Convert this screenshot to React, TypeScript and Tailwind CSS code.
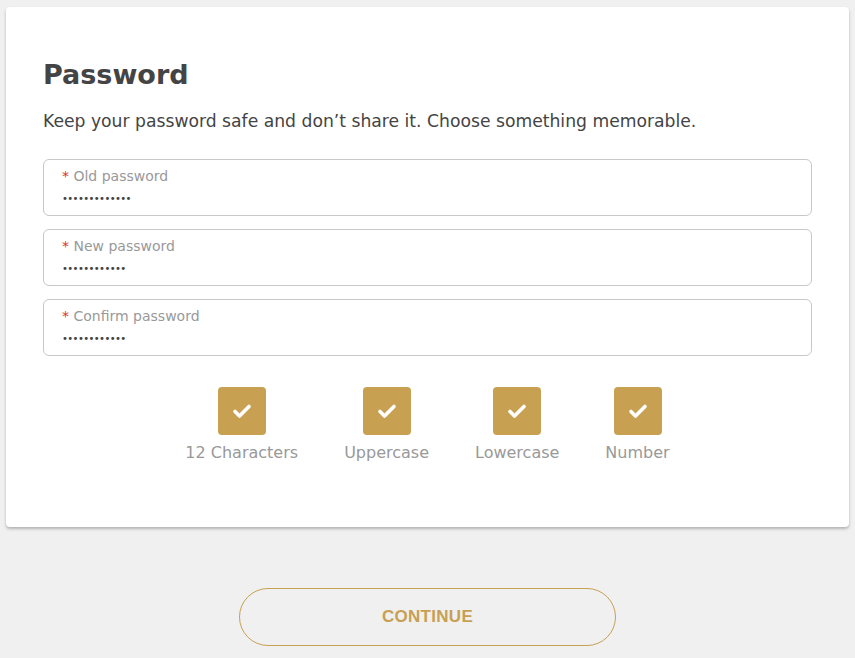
import React from "react";

const gold = "#c8a052";

function Field({ label, dots }: { label: string; dots: number }) {
  return (
    <div className="h-[57px] rounded-[6px] border border-[#c8c8c8] px-[18px] pt-[7px]">
      <div className="text-[14px] leading-[18px] text-[#999999]">
        <span className="text-[#e0301e]">*</span> {label}
      </div>
      <div className="mt-[8px] text-[10px] leading-[12px] tracking-[-0.6px] text-[#444]">
        {"•".repeat(dots)}
      </div>
    </div>
  );
}

function Check({ label }: { label: string }) {
  return (
    <div className="flex flex-col items-center">
      <div className="flex h-[48px] w-[48px] items-center justify-center rounded-[4px]" style={{ backgroundColor: gold }}>
        <svg width="20" height="16" viewBox="0 0 20 16">
          <path d="M3 8.5 L7.5 13 L17 3.5" fill="none" stroke="#fff" strokeWidth="3.6" strokeLinecap="round" strokeLinejoin="round" />
        </svg>
      </div>
      <div className="mt-[8px] text-[16px] leading-[20px] text-[#999999]">{label}</div>
    </div>
  );
}

export default function App() {
  return (
    <div className="min-h-[658px] bg-[#f0f0f0] px-[6px] pt-[7px]" style={{ fontFamily: '"DejaVu Sans", sans-serif' }}>
      <div className="h-[520px] rounded-[4px] bg-white px-[37px] pt-[52px] shadow-[0_2px_3px_rgba(0,0,0,0.25)]">
        <h1 className="text-[27px] font-bold leading-[32px] text-[#444444]">Password</h1>
        <p className="mt-[19px] text-[17.2px] leading-[22px] text-[#444444]">
          Keep your password safe and don’t share it. Choose something memorable.
        </p>
        <div className="mt-[27px] flex flex-col gap-[13px]">
          <Field label="Old password" dots={13} />
          <Field label="New password" dots={12} />
          <Field label="Confirm password" dots={12} />
        </div>
        <div className="mt-[31px] flex justify-center gap-[46px]">
          <Check label="12 Characters" />
          <Check label="Uppercase" />
          <Check label="Lowercase" />
          <Check label="Number" />
        </div>
      </div>
      <div className="flex justify-center pt-[61px]">
        <button
          className="flex h-[58px] w-[377px] items-center justify-center rounded-full border text-[17px] font-bold tracking-[0.3px]"
          style={{ borderColor: gold, color: gold, fontFamily: '"Liberation Sans", Arial, sans-serif' }}
        >
          CONTINUE
        </button>
      </div>
    </div>
  );
}
